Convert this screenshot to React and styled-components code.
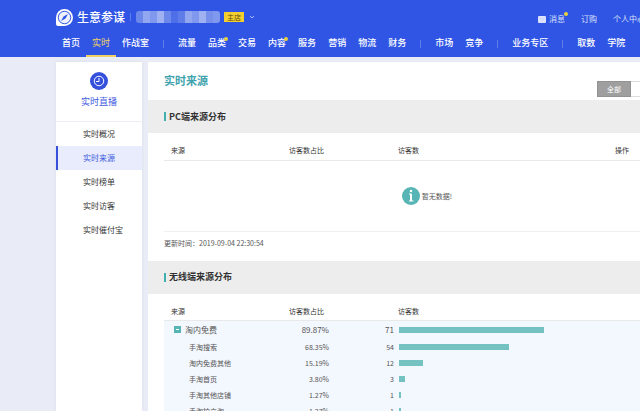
import React from "react";
import styled, { createGlobalStyle } from "styled-components";

const navGroups = [
  [{ name: "首页" }, { name: "实时", active: true }, { name: "作战室" }],
  [
    { name: "流量" },
    { name: "品类", dot: true },
    { name: "交易" },
    { name: "内容", dot: true },
    { name: "服务" },
    { name: "营销" },
    { name: "物流" },
    { name: "财务" },
  ],
  [{ name: "市场" }, { name: "竞争" }],
  [{ name: "业务专区" }],
  [{ name: "取数" }, { name: "学院" }],
];

const menu = ["实时概况", "实时来源", "实时榜单", "实时访客", "实时催付宝"];

const rows = [
  { name: "淘内免费", rate: "89.87%", count: 71, parent: true },
  { name: "手淘搜索", rate: "68.35%", count: 54 },
  { name: "淘内免费其他", rate: "15.19%", count: 12 },
  { name: "手淘首页", rate: "3.80%", count: 3 },
  { name: "手淘其他店铺", rate: "1.27%", count: 1 },
  { name: "手淘拍立淘", rate: "1.27%", count: 1 },
];

const mosaic = [
  "#6d88eb", "#93a7f0", "#8098ee", "#a0b1f2", "#6d88eb", "#4f6fe8", "#5f7ce9",
  "#93a7f0", "#8098ee", "#a0b1f2", "#7690ec", "#8098ee",
];

const SourceTable = ({ action, children }) => (
  <Table>
    <colgroup>
      <col className="source" />
      <col className="rate" />
      <col className="count" />
      <col />
      <col className="action" />
    </colgroup>
    <thead>
      <tr>
        <th className="first">来源</th>
        <th>访客数占比</th>
        <th></th>
        <th className="visitors">访客数</th>
        <th>{action}</th>
      </tr>
    </thead>
    <tbody>{children}</tbody>
  </Table>
);

const App = () => {
  return (
    <Page>
      <GlobalStyle />
      <Header>
        <TopBar>
          <Brand href="#">
            <svg width="17" height="17" viewBox="0 0 34 34">
              <path d="M17 0a17 17 0 1 1 0 34H4a4 4 0 0 1-4-4V17A17 17 0 0 1 17 0z" fill="#fff" />
              <circle cx="17" cy="17" r="12.500" fill="#eef1fd" stroke="#3055e4" strokeWidth="2" />
              <path d="M24 10l-5 9-9 5 5-9z" fill="#3055e4" />
            </svg>
            <h1>生意参谋</h1>
          </Brand>
          <Divider $space={5} />
          <ShopName>
            {mosaic.map((color, i) => (
              <i key={i} style={{ background: color }} />
            ))}
          </ShopName>
          <ShopTag>主店</ShopTag>
          <svg width="6" height="4" viewBox="0 0 6 4">
            <path d="M1 1l2 2 2-2" fill="none" stroke="#a9b9f4" />
          </svg>
          <Actions>
            <a href="#">
              <svg width="8" height="7" viewBox="0 0 16 14">
                <rect width="16" height="14" rx="2" fill="#dbe2fb" />
                <path d="M2 3l6 4 6-4" fill="none" stroke="#b9c6f7" strokeWidth="1" />
              </svg>
              消息
              <Dot />
            </a>
            <a href="#">订购</a>
            <a href="#">个人中心</a>
          </Actions>
        </TopBar>
        <Nav>
          {navGroups.map((group, i) => (
            <React.Fragment key={i}>
              {i > 0 && <Divider $space={14} />}
              <NavGroup>
                {group.map((item) => (
                  <NavLink href="#" key={item.name} $active={item.active}>
                    {item.name}
                    {item.dot && <Dot />}
                  </NavLink>
                ))}
              </NavGroup>
            </React.Fragment>
          ))}
        </Nav>
      </Header>

      <Body>
        <Sidebar>
          <SideTitle>
            <svg width="18" height="18" viewBox="0 0 36 36">
              <circle cx="18" cy="18" r="18" fill="#3551dc" />
              <circle cx="18" cy="18" r="9.500" fill="none" stroke="#fff" strokeWidth="2" />
              <path d="M18 12v7h-6" fill="none" stroke="#fff" strokeWidth="2" />
            </svg>
            实时直播
          </SideTitle>
          <Menu>
            {menu.map((name) => (
              <MenuLink href="#" key={name} $active={name === "实时来源"}>
                {name}
              </MenuLink>
            ))}
          </Menu>
        </Sidebar>

        <Main>
          <PageHead>
            <h2>实时来源</h2>
            <Segments>
              <button type="button">全部</button>
            </Segments>
          </PageHead>

          <SectionTitle>PC端来源分布</SectionTitle>
          <Panel>
            <SourceTable action="操作">
              <tr>
                <td colSpan="5">
                  <Empty>
                    <svg width="18" height="18" viewBox="0 0 36 36">
                      <circle cx="18" cy="18" r="18" fill="#57b5b5" />
                      <circle cx="18" cy="8" r="2.500" fill="#fff" />
                      <path d="M14 14h5v14M14 28h9" fill="none" stroke="#fff" strokeWidth="2" />
                      <path d="M18 14v14" stroke="#fff" strokeWidth="4" />
                    </svg>
                    暂无数据!
                  </Empty>
                </td>
              </tr>
            </SourceTable>
            <Updated>更新时间：2019-09-04 22:30:54</Updated>
          </Panel>

          <SectionTitle>无线端来源分布</SectionTitle>
          <Panel>
            <SourceTable>
              {rows.map((row) => (
                <Row key={row.name} $parent={row.parent}>
                  <td>
                    {row.parent && (
                      <Toggle type="button" aria-label="淘内免费">
                        <svg width="7" height="7" viewBox="0 0 7 7">
                          <rect width="7" height="7" fill="#57b5b5" />
                          <path d="M2 3.500h3" stroke="#fff" />
                        </svg>
                      </Toggle>
                    )}
                    {row.name}
                  </td>
                  <td className="number">{row.rate}</td>
                  <td className="number">{row.count}</td>
                  <td className="bar" colSpan="2">
                    <Bar style={{ width: Math.floor((row.count / 71) * 145) }} />
                  </td>
                </Row>
              ))}
            </SourceTable>
          </Panel>
        </Main>
      </Body>
    </Page>
  );
};

export default App;

const GlobalStyle = createGlobalStyle`
  * {
    box-sizing: border-box;
  }
  body {
    margin: 0;
    overflow: hidden;
    background: #e9ecf6;
    color: #555;
    font: 7px/10px "Noto Sans CJK SC", sans-serif;
  }
  h1, h2, h3, p {
    margin: 0;
  }
  a {
    color: inherit;
    text-decoration: none;
  }
  button {
    padding: 0;
    border: 0;
    font: inherit;
  }
  svg {
    display: block;
    flex: none;
  }
`;

const Page = styled.div`
  display: flex;
  flex-direction: column;
  min-width: 660px;
  height: 100vh;
  overflow: hidden;
  white-space: nowrap;
`;

const Header = styled.header`
  flex: none;
  background: #3055e4;
  color: #fff;
`;

const TopBar = styled.div`
  display: flex;
  align-items: center;
  height: 30px;
  padding: 4px 15px 0 56px;
`;

const Brand = styled.a`
  display: flex;
  align-items: center;
  gap: 4px;
  h1 {
    font-size: 12px;
    font-weight: 500;
    line-height: 16px;
  }
`;

const Divider = styled.span`
  width: 1px;
  height: 8px;
  margin: 0 ${(props) => props.$space}px;
  background: #5f7ce9;
`;

const ShopName = styled.span`
  display: grid;
  grid-template-columns: repeat(12, 7px);
  height: 12px;
  margin-right: 4px;
  border-radius: 3px;
  overflow: hidden;
`;

const ShopTag = styled.span`
  margin-right: 5px;
  padding: 0 3px;
  background: #f2cf2e;
  color: #5a4a10;
`;

const Actions = styled.div`
  display: flex;
  gap: 16px;
  margin-left: auto;
  padding-top: 4px;
  color: #dbe2fb;
  font-size: 8px;
  line-height: 12px;
  a {
    display: flex;
    align-items: center;
    gap: 3px;
    position: relative;
  }
`;

const Dot = styled.i`
  position: absolute;
  top: -1px;
  right: -3px;
  width: 4px;
  height: 4px;
  border-radius: 50%;
  background: #e6d23c;
`;

const Nav = styled.nav`
  display: flex;
  align-items: center;
  height: 27px;
  padding-left: 56px;
`;

const NavGroup = styled.div`
  display: flex;
  margin: 0 -6px;
  &:first-child {
    margin-left: 0;
  }
`;

const NavLink = styled.a`
  position: relative;
  height: 27px;
  padding: 0 6px;
  border-bottom: 2px solid ${(props) => (props.$active ? "#f0d264" : "transparent")};
  color: ${(props) => (props.$active ? "#f0d264" : "#fff")};
  font-size: 9px;
  font-weight: ${(props) => (props.$active ? 400 : 500)};
  line-height: 26px;
  ${Dot} {
    top: 7px;
    right: 4px;
  }
`;

const Body = styled.div`
  display: flex;
  flex: 1;
  gap: 6px;
  min-height: 0;
  padding: 5px 0 0 56px;
`;

const Sidebar = styled.aside`
  flex: none;
  width: 86px;
  background: #fff;
  box-shadow: 0 0 3px #d8dcea;
`;

const SideTitle = styled.div`
  display: flex;
  flex-direction: column;
  align-items: center;
  gap: 5px;
  height: 60px;
  padding-top: 10px;
  border-bottom: 1px solid #eceef3;
  color: #3f5be0;
  font-size: 9px;
  line-height: 14px;
`;

const Menu = styled.nav`
  display: flex;
  flex-direction: column;
`;

const MenuLink = styled.a`
  padding-left: 25px;
  border-left: 2px solid ${(props) => (props.$active ? "#3551dc" : "transparent")};
  background: ${(props) => (props.$active ? "#e8ecfc" : "transparent")};
  color: ${(props) => (props.$active ? "#3f5be0" : "#333")};
  font-size: 8px;
  line-height: 24px;
`;

const Main = styled.main`
  flex: 1;
  background: #fff;
`;

const PageHead = styled.div`
  display: flex;
  justify-content: space-between;
  height: 38px;
  padding-left: 16px;
  h2 {
    color: #41a3ae;
    font-size: 11px;
    line-height: 36px;
  }
`;

const Segments = styled.div`
  width: 63px;
  height: 16px;
  margin-top: 19px;
  border: 1px solid #ddd;
  border-radius: 2px;
  button {
    display: block;
    width: 32px;
    height: 14px;
    background: #9f9f9f;
    color: #fff;
    outline: 1px solid #929292;
  }
`;

const SectionTitle = styled.h3`
  display: flex;
  align-items: center;
  gap: 3px;
  height: 33px;
  padding-left: 16px;
  background: #ededed;
  color: #333;
  font-size: 9px;
  &::before {
    content: "";
    width: 2px;
    height: 9px;
    background: #41b0ae;
  }
`;

const Panel = styled.div`
  padding-left: 16px;
`;

const Table = styled.table`
  width: 100%;
  table-layout: fixed;
  border-collapse: collapse;
  .source {
    width: 125px;
  }
  .rate {
    width: 40px;
  }
  .count {
    width: 65px;
  }
  .action {
    width: 45px;
  }
  th {
    height: 27px;
    padding: 8px 0 0;
    border-bottom: 1px solid #e9e9e9;
    color: #333;
    font-weight: 400;
    text-align: left;
  }
  th.first {
    padding-left: 7px;
  }
  th.visitors {
    padding-left: 4px;
  }
  td {
    padding: 0;
  }
`;

const Empty = styled.div`
  display: flex;
  align-items: center;
  justify-content: center;
  gap: 2px;
  height: 71px;
  padding-left: 30px;
  border-bottom: 1px solid #f0f0f0;
`;

const Updated = styled.p`
  height: 29px;
  line-height: 22px;
`;

const Row = styled.tr`
  height: ${(props) => (props.$parent ? 18 : 16)}px;
  background: #f3f7fe;
  font-size: ${(props) => (props.$parent ? 8 : 7)}px;
  td:first-child {
    padding-left: ${(props) => (props.$parent ? 10 : 25)}px;
  }
  .number {
    text-align: right;
  }
  .bar {
    padding-left: 5px;
  }
`;

const Toggle = styled.button`
  margin-right: 4px;
  background: none;
  svg {
    display: inline-block;
  }
`;

const Bar = styled.div`
  min-width: 1px;
  height: 6px;
  background: #74c2c2;
`;
